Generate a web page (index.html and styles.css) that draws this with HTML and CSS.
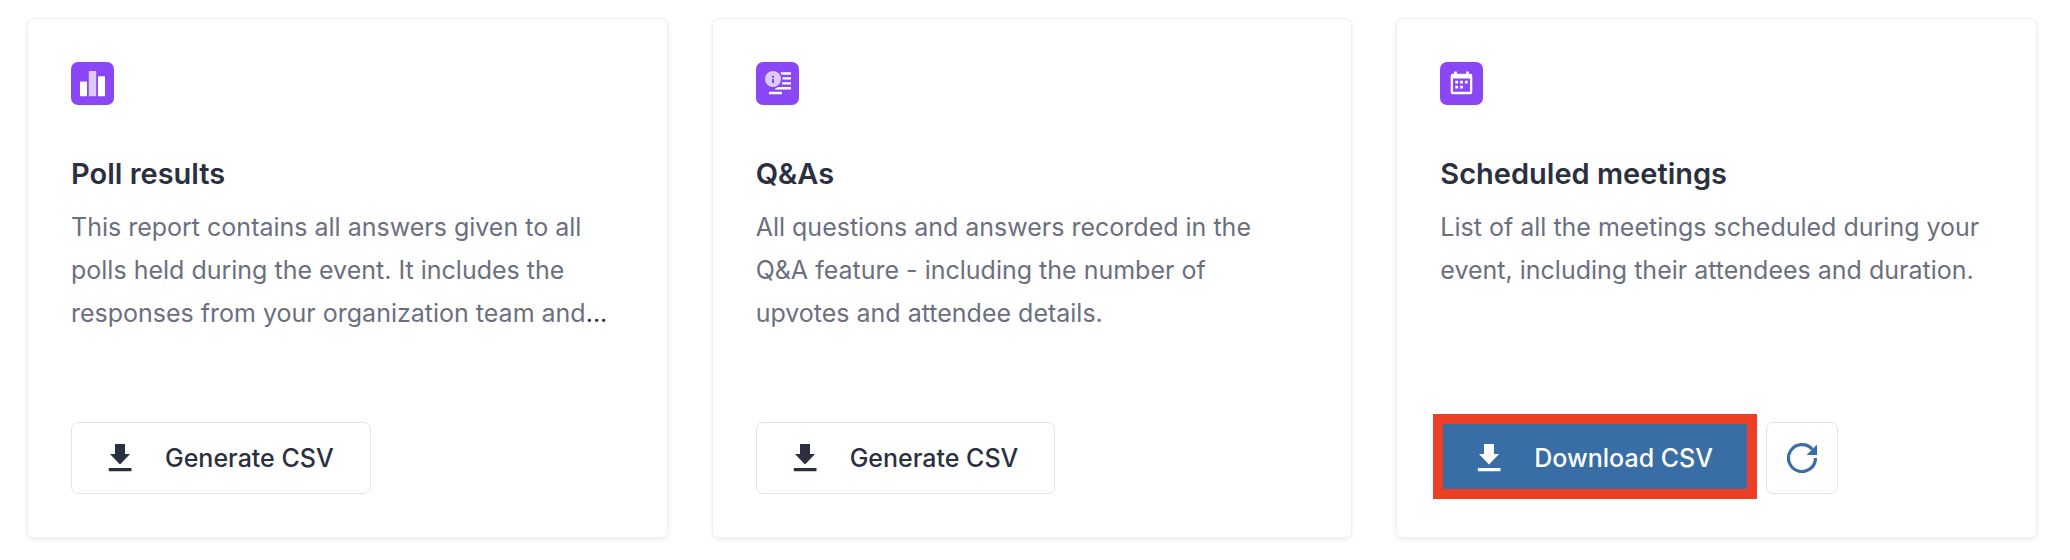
FILE: index.html
```html
<!DOCTYPE html>
<html lang="en">
<head>
<meta charset="utf-8">
<title>Reports</title>
<link rel="stylesheet" href="styles.css">
</head>
<body>
<main class="reports">
  <article class="card">
    <svg class="badge" viewBox="0 0 43 43" aria-hidden="true"><rect width="43" height="43" rx="7" fill="#8b46f5"/><rect x="9" y="19.500" width="7" height="14.700" rx=".6" fill="#fff"/><rect x="27" y="14.300" width="7" height="19.900" rx=".6" fill="#fff"/><rect x="17.800" y="9" width="7.400" height="25.200" rx=".6" fill="#dccafb"/></svg>
    <h2 class="title">Poll results</h2>
    <p class="text">This report contains all answers given to all polls held during the event. It includes the responses from your organization team and<span class="more">...</span></p>
    <div class="actions"><button class="button" type="button"><svg class="icon" viewBox="0 0 24 28" aria-hidden="true"><path fill="currentColor" d="M7 0h10v10h5L12 20.500 2 10h5zM.8 24h22.700v3.200H.8z"/></svg>Generate CSV</button></div>
  </article>
  <article class="card">
    <svg class="badge" viewBox="0 0 43 43" aria-hidden="true"><rect width="43" height="43" rx="7" fill="#8b46f5"/><path fill="#fff" d="M24.500 10.300H35v2.400h-9.300zM26.500 15.200H35v2.400h-8.500zM26 20.200h9v2.400h-9zM22 25h13v2.500H18zM13 29.800h13v2.400H13z"/><circle cx="17" cy="17" r="8" fill="#dccafb"/><path fill="#8b46f5" d="M16 13.800h2v2h-2zM16 17h2v4h-2z"/></svg>
    <h2 class="title">Q&amp;As</h2>
    <p class="text">All questions and answers recorded in the Q&amp;A feature - including the number of upvotes and attendee details.</p>
    <div class="actions"><button class="button" type="button"><svg class="icon" viewBox="0 0 24 28" aria-hidden="true"><path fill="currentColor" d="M7 0h10v10h5L12 20.500 2 10h5zM.8 24h22.700v3.200H.8z"/></svg>Generate CSV</button></div>
  </article>
  <article class="card">
    <svg class="badge" viewBox="0 0 43 43" aria-hidden="true"><rect width="43" height="43" rx="7" fill="#8b46f5"/><path fill="#fff" fill-rule="evenodd" d="M14.200 9.500h2.600v2.300h9.400V9.500h2.600v2.300h1.500q2 0 2 2v16.400q0 2-2 2H12.700q-2 0-2-2V13.800q0-2 2-2h1.500zM13 16.500v13.300h17V16.500z"/><path fill="#fff" d="M15.300 18.800h2.800v2.800h-2.800zM20.100 18.800h2.800v2.800h-2.800zM24.900 18.800h2.800v2.800h-2.800zM15.300 23.800h2.800v2.800h-2.800zM20.100 23.800h2.800v2.800h-2.800z"/></svg>
    <h2 class="title">Scheduled meetings</h2>
    <p class="text">List of all the meetings scheduled during your event, including their attendees and duration.</p>
    <div class="actions"><button class="button primary" type="button"><svg class="icon" viewBox="0 0 24 28" aria-hidden="true"><path fill="currentColor" d="M7 0h10v10h5L12 20.500 2 10h5zM.8 24h22.700v3.200H.8z"/></svg>Download CSV</button><button class="refresh" type="button" aria-label="Refresh"><svg class="refresh-icon" viewBox="0 0 30 30" aria-hidden="true"><path d="M28.500 15A13.500 13.500 0 1 1 25.200 6.200" fill="none" stroke="currentColor" stroke-width="3.200"/><path d="M30 1.500v10.500H19.500z" fill="currentColor"/></svg></button></div>
  </article>
</main>
</body>
</html>
```
FILE: styles.css
```css
* { box-sizing: border-box; }
body { margin: 0; background: #fff; color: #2b3041; font-family: Inter, sans-serif; }
.reports { display: grid; grid-template-columns: repeat(3, 1fr); gap: 44px; padding: 18px 33px 22px 27px; }
.card { display: flex; flex-direction: column; padding: 43px; min-height: 520px; border: 1px solid #f0f0f1; border-radius: 7px; box-shadow: 0 2px 5px rgba(0, 0, 0, .08); }
.badge { width: 43px; height: 43px; }
.title { margin: 48px 0 0; font-size: 29px; line-height: 42px; font-weight: 600; }
.text { margin: 11px 0 0; padding-right: 8px; font-size: 25px; line-height: 43px; color: #6b6f80; }
.more { color: #2b3041; }
.actions { display: flex; gap: 16px; margin-top: auto; }
.button { position: relative; display: flex; align-items: center; gap: 33px; height: 72px; padding: 0 36px; border: 1px solid #e4e4e6; border-radius: 7px; background: #fff; color: #2b3041; font: 500 25px/36px Inter, sans-serif; }
.icon { width: 24px; height: 28px; }
.primary { background: #386da6; color: #fff; border-color: #386da6; }
.primary::after { content: ""; position: absolute; inset: -9px -8px -6px; border: 10px solid #ec3f26; }
.refresh { display: grid; place-items: center; width: 72px; height: 72px; padding: 0; border: 1px solid #e4e4e6; border-radius: 7px; background: #fff; color: #386da6; }
.refresh-icon { width: 30px; height: 30px; }
```
